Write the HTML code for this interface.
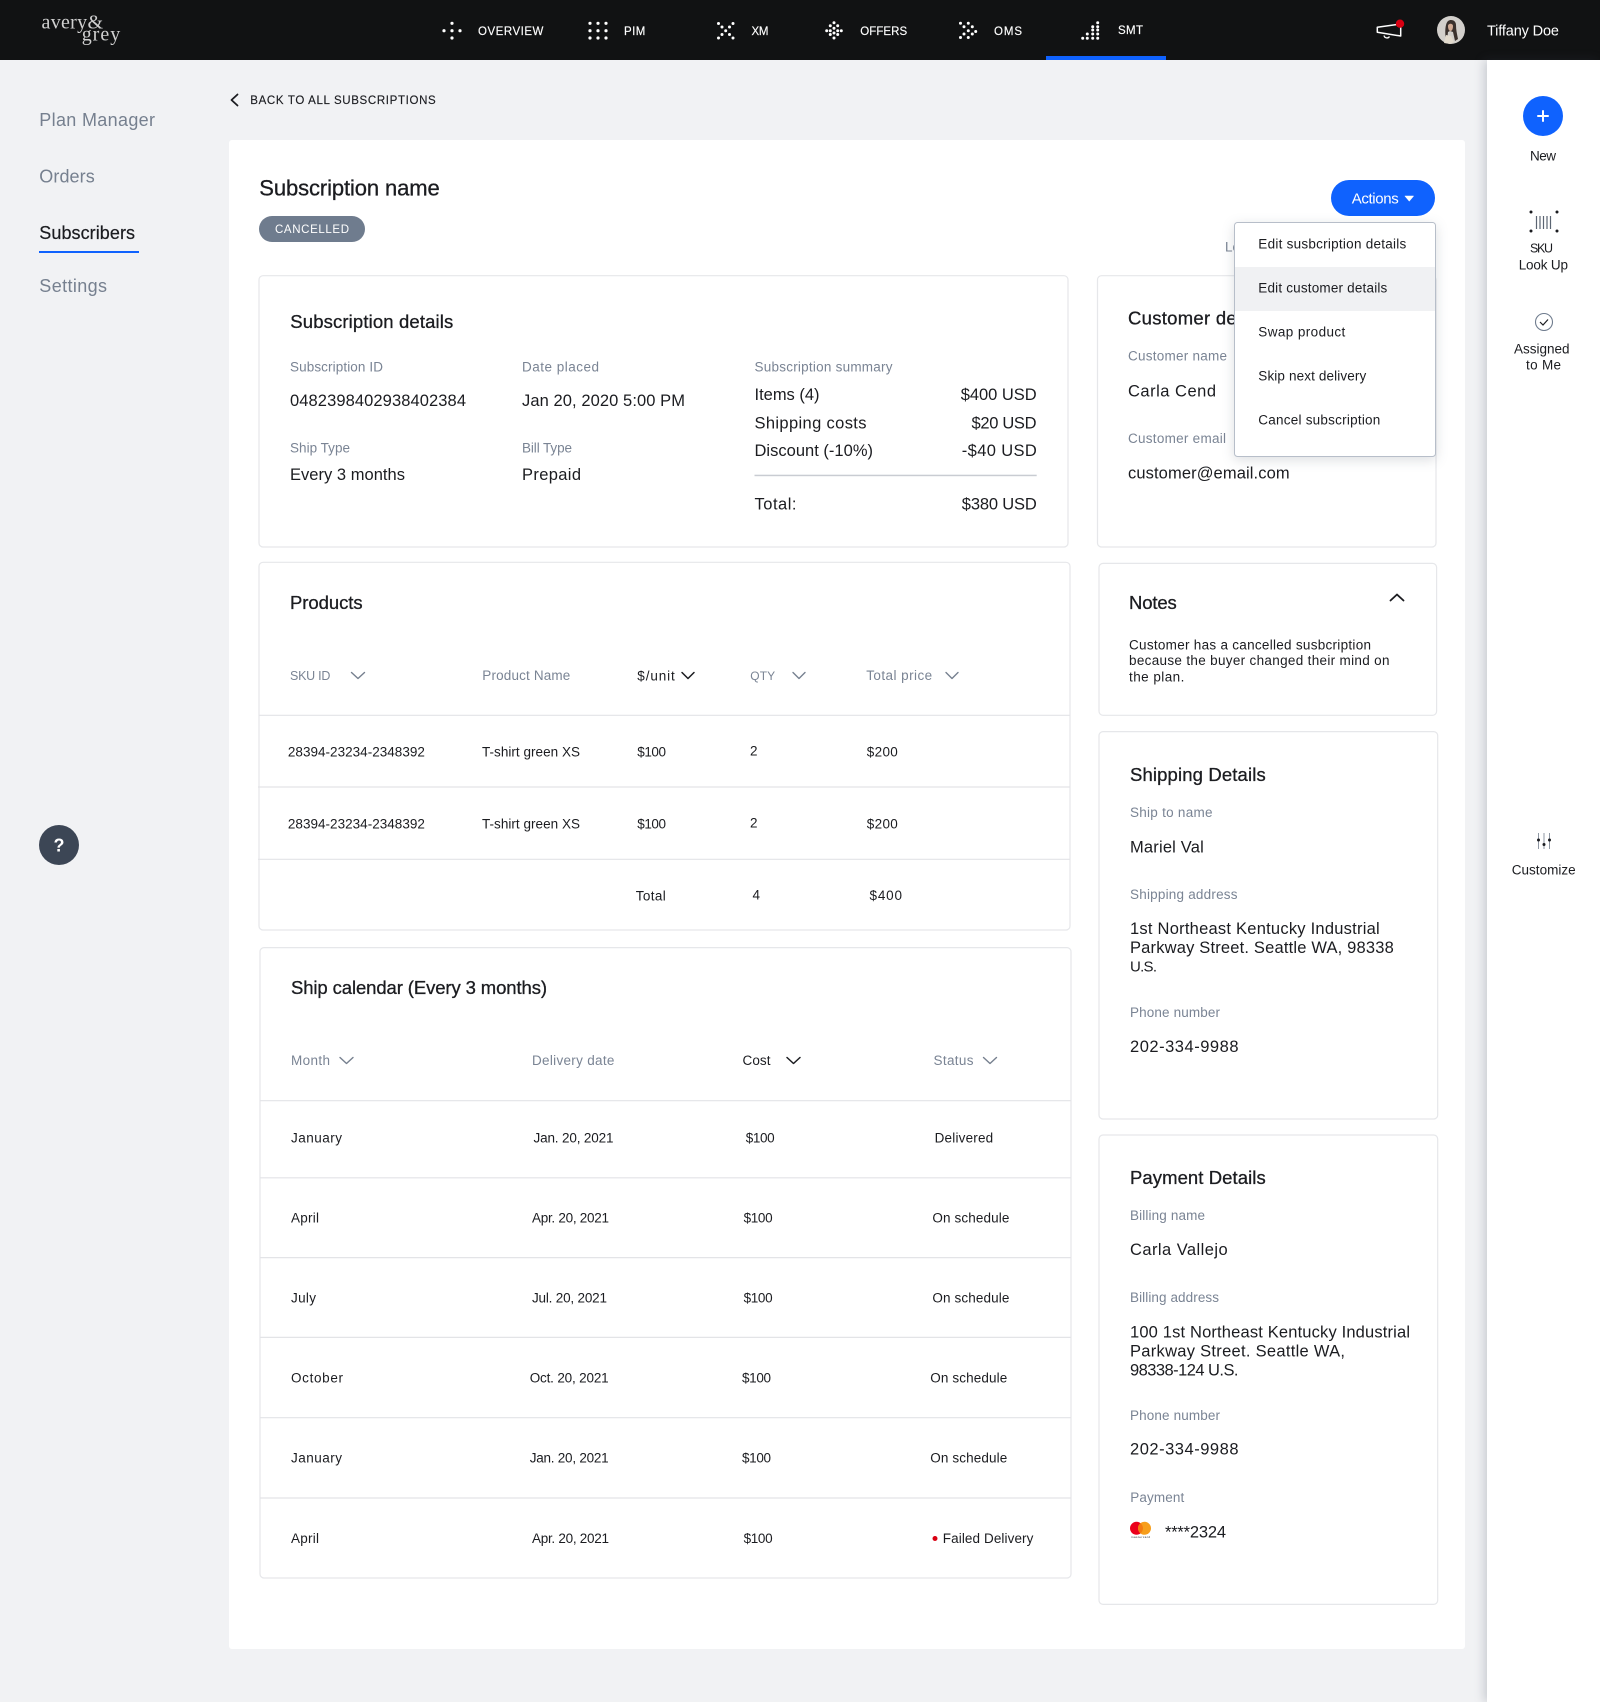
<!DOCTYPE html>
<html lang="en">
<head>
<meta charset="utf-8">
<title>Subscription name</title>
<style>
html,body{margin:0;padding:0;background:#f1f2f4;overflow:hidden}
svg{display:block;font-family:"Liberation Sans",sans-serif}
text{white-space:pre;fill:#1b1c20}
.l{font-size:13.5px;fill:#7a8494;transform:translateY(-.6px)}
.v{font-size:16.5px;transform:translateY(-.4px)}
.s{font-size:13.5px;transform:translateY(-.3px)}
.h{font-size:18.5px;stroke:#1b1c20;stroke-width:.3px;transform:translateY(-.3px)}
.n{font-size:11.5px;fill:#fff;stroke:#fff;stroke-width:.15px}
.g{font-size:18px;fill:#76808f;transform:translateY(-.4px)}
.c{fill:none;stroke:#76808f;stroke-width:1.4;stroke-linecap:round;stroke-linejoin:round}
.d{fill:none;stroke:#1b1c20;stroke-width:1.5;stroke-linecap:round;stroke-linejoin:round}
.card{fill:#fff;stroke:#e6e7ea;stroke-width:1.2}
.r{stroke:#e3e4e7;stroke-width:1.2}
.dots{fill:none;stroke:#fff;stroke-width:3.2;stroke-linecap:round}
</style>
</head>
<body>
<svg width="1600" height="1702" viewBox="0 0 1600 1702" xmlns="http://www.w3.org/2000/svg">
<rect width="1600" height="1702" fill="#f1f2f4"/>

<!-- top bar -->
<rect width="1600" height="60" fill="#111213"/>
<rect x="1046" y="56" width="120" height="4" fill="#0f62fe"/>
<text x="41.5" y="28.3" textLength="61.5" style="font-family:'Liberation Serif',serif;font-size:20px;fill:#d0d0d0">avery&amp;</text>
<text x="81.7" y="40.7" textLength="38.5" style="font-family:'Liberation Serif',serif;font-size:20px;fill:#d0d0d0">grey</text>

<path class="dots" d="M452 23.3h0M444 30.7h0M452 30.7h0M460 30.7h0M452 38h0"/>
<text class="n" x="478" y="35" textLength="65.4">OVERVIEW</text>
<path class="dots" d="M590 23.3h0M598 23.3h0M606 23.3h0M590 30.7h0M598 30.7h0M606 30.7h0M590 38h0M598 38h0M606 38h0"/>
<text class="n" x="624" y="35" textLength="21.4">PIM</text>
<path class="dots" style="stroke-width:3" d="M718.5 23.5h0M733 23.5h0M718.5 38h0M733 38h0M722 27h0M729.5 27h0M725.7 30.7h0M722 34.5h0M729.5 34.5h0"/>
<text class="n" x="751.5" y="35" textLength="17">XM</text>
<path class="dots" style="stroke-width:3" d="M834 22.7h0M830.3 25.7h0M837.7 25.7h0M834 28.3h0M826.7 30.7h0M830.3 30.7h0M837.7 30.7h0M841.3 30.7h0M834 33h0M830.3 34.5h0M837.7 34.5h0M834 38h0"/>
<text class="n" x="860.2" y="35" textLength="47">OFFERS</text>
<path class="dots" style="stroke-width:3" d="M960.5 23.3h0M968.3 23.3h0M964 26.7h0M972.3 26.7h0M968.3 30.7h0M975.7 31.5h0M964 34h0M972.3 34h0M960.5 37.5h0M968.3 37.5h0"/>
<text class="n" x="994" y="35" textLength="28">OMS</text>
<path class="dots" style="stroke-width:3" d="M1082.7 38.3h0M1087.3 38.3h0M1092.7 38.3h0M1097.7 38.3h0M1087.3 34h0M1092.7 34h0M1097.7 34h0M1092.7 30h0M1097.7 30h0M1092.7 26.7h0M1097.7 26.7h0M1097.7 22.7h0"/>
<text class="n" x="1118" y="34" textLength="25">SMT</text>

<path d="M1377.3 27.3L1400.7 24V36L1377.3 32.3Z" fill="none" stroke="#fff" stroke-width="1.5" stroke-linejoin="round"/>
<path d="M1384 35.5a3 3 0 0 0 5.5 1" fill="none" stroke="#fff" stroke-width="1.3"/>
<circle cx="1400" cy="23.7" r="4.2" fill="#d90012"/>
<circle cx="1451" cy="30" r="14" fill="#d2cfcb"/>
<path d="M1446 41c-1-7-1-12 0-16 1-4 3-5 5-5 3 0 5 2 5 5 0 5 1 9 2 14l-3 2-2-9-3-1-2 1-1 9z" fill="#3a312d"/>
<path d="M1448 26c0-3 5-3 5 0 0 3-1 5-2.500 5s-2.500-2-2.500-5z" fill="#d1ab95"/>
<path d="M1444 43l2-8 5 1 3 6-4 2z" fill="#e2dacd"/>
<text x="1487" y="35.5" textLength="72" style="font-size:14.5px;fill:#fff">Tiffany Doe</text>

<!-- left nav -->
<text class="g" x="39.3" y="126.5" textLength="115.7">Plan Manager</text>
<text class="g" x="39.3" y="183" textLength="55.4">Orders</text>
<text class="g" x="39.3" y="239.3" textLength="95.7" style="fill:#1b1c20;stroke:#1b1c20;stroke-width:.2px">Subscribers</text>
<rect x="39" y="251" width="100" height="2" fill="#0f62fe"/>
<text class="g" x="39.3" y="292.3" textLength="67.7">Settings</text>
<circle cx="59" cy="845" r="20" fill="#3c4655"/>
<text x="59" y="851.5" text-anchor="middle" style="font-size:18px;font-weight:bold;fill:#fff">?</text>

<!-- back -->
<path d="M237.5 94.500l-6 5.500 6 5.500" fill="none" stroke="#1b1c20" stroke-width="1.8" stroke-linecap="round" stroke-linejoin="round"/>
<text x="250.3" y="104" textLength="185.4" style="font-size:11.5px;stroke:#1b1c20;stroke-width:.15px">BACK TO ALL SUBSCRIPTIONS</text>

<!-- main card -->
<rect x="229" y="140" width="1236" height="1509" rx="3" fill="#fff"/>
<text x="259.3" y="195.5" textLength="180.4" style="font-size:22px;stroke:#1b1c20;stroke-width:.3px">Subscription name</text>
<rect x="259" y="216" width="106" height="26" rx="13" fill="#6f7c8e"/>
<text x="275" y="233" textLength="74" style="font-size:11.5px;fill:#fff">CANCELLED</text>
<text class="l" x="1225" y="252" textLength="15">Lo</text>

<!-- subscription details -->
<rect class="card" x="259" y="275.7" width="809" height="271.300" rx="4"/>
<text class="h" x="290.3" y="328.5" textLength="163">Subscription details</text>
<text class="l" x="290" y="371.9" textLength="93">Subscription ID</text>
<text class="l" x="522" y="371.9" textLength="77">Date placed</text>
<text class="l" x="754.5" y="371.9" textLength="138">Subscription summary</text>
<text class="v" x="290" y="406.5" textLength="176">0482398402938402384</text>
<text class="v" x="522" y="406.5" textLength="163">Jan 20, 2020 5:00 PM</text>
<text class="v" x="754.5" y="400.6" textLength="65">Items (4)</text>
<text class="v" x="960.7" y="400.6" textLength="76">$400 USD</text>
<text class="v" x="754.5" y="428.8" textLength="112">Shipping costs</text>
<text class="v" x="971.5" y="428.8" textLength="65">$20 USD</text>
<text class="v" x="754.5" y="456.5" textLength="118.5">Discount (-10%)</text>
<text class="v" x="961.8" y="456.5" textLength="75">-$40 USD</text>
<rect x="754.5" y="474.7" width="282.200" height="1.5" fill="#c9ccd2"/>
<text class="v" x="754.5" y="509.7" textLength="42">Total:</text>
<text class="v" x="961.8" y="509.7" textLength="75">$380 USD</text>
<text class="l" x="290" y="453.3" textLength="60">Ship Type</text>
<text class="l" x="522" y="453.3" textLength="50">Bill Type</text>
<text class="v" x="290" y="480.4" textLength="115">Every 3 months</text>
<text class="v" x="522" y="480.4" textLength="59">Prepaid</text>

<!-- customer -->
<rect class="card" x="1097.5" y="275.7" width="338.5" height="271.300" rx="4"/>
<text class="h" x="1128" y="325" textLength="143">Customer details</text>
<text class="l" x="1128" y="361" textLength="99">Customer name</text>
<text class="v" x="1128" y="396.8" textLength="88">Carla Cend</text>
<text class="l" x="1128" y="443.5" textLength="98">Customer email</text>
<text class="v" x="1128" y="478.7" textLength="161.6">customer@email.com</text>

<!-- products -->
<rect class="card" x="259" y="562.3" width="811" height="367.700" rx="4"/>
<text class="h" x="290" y="609.5" textLength="72.6">Products</text>
<text class="l" x="290" y="680.7" textLength="40.4" style="font-size:12.5px">SKU ID</text>
<path class="c" d="M351.5 672.500l6.5 6 6.5-6"/>
<text class="l" x="482.3" y="680.7" textLength="88">Product Name</text>
<text class="s" x="637.3" y="680.7" textLength="37.5">$/unit</text>
<path class="d" d="M682 672.500l6 6 6-6"/>
<text class="l" x="750.2" y="680.7" textLength="25" style="font-size:12px">QTY</text>
<path class="c" d="M793 672.500l6 6 6-6"/>
<text class="l" x="866.2" y="680.7" textLength="66">Total price</text>
<path class="c" d="M946 672.500l6 6 6-6"/>
<path class="r" d="M259 715.300H1070M258 787H1070M258 859.300H1070"/>
<text class="s" x="287.9" y="756.7" textLength="137">28394-23234-2348392</text>
<text class="s" x="482" y="756.7" textLength="98">T-shirt green XS</text>
<text class="s" x="637.3" y="756.7" textLength="28.7">$100</text>
<text class="s" x="750" y="755.7" textLength="7">2</text>
<text class="s" x="866.8" y="756.7" textLength="31">$200</text>
<text class="s" x="287.9" y="828.7" textLength="137">28394-23234-2348392</text>
<text class="s" x="482" y="828.7" textLength="98">T-shirt green XS</text>
<text class="s" x="637.3" y="828.7" textLength="28.7">$100</text>
<text class="s" x="750" y="827.7" textLength="7">2</text>
<text class="s" x="866.8" y="828.7" textLength="31">$200</text>
<text class="s" x="635.8" y="900.7" textLength="30">Total</text>
<text class="s" x="752.5" y="900" textLength="7">4</text>
<text class="s" x="869.5" y="900.5" textLength="32.5">$400</text>

<!-- calendar -->
<rect class="card" x="260" y="947.6" width="811" height="630.400" rx="4"/>
<text class="h" x="291" y="994.3" textLength="256">Ship calendar (Every 3 months)</text>
<text class="l" x="291" y="1065.5" textLength="39">Month</text>
<path class="c" d="M340 1057.500l6.5 6 6.5-6"/>
<text class="l" x="532" y="1065.5" textLength="82.4">Delivery date</text>
<text class="s" x="742.5" y="1065.5" textLength="28">Cost</text>
<path class="d" d="M787 1057.500l6.5 6 6.5-6"/>
<text class="l" x="933.5" y="1065.5" textLength="40">Status</text>
<path class="c" d="M983.5 1057.500l6.5 6 6.5-6"/>
<path class="r" d="M260 1100.700H1071M260 1177.800H1071M260 1257.600H1071M260 1337.400H1071M260 1417.700H1071M260 1498H1071"/>

<text class="s" x="291" y="1142.6" textLength="51">January</text>
<text class="s" x="533.5" y="1142.6" textLength="80">Jan. 20, 2021</text>
<text class="s" x="745.7" y="1142.6" textLength="29">$100</text>
<text class="s" x="934.6" y="1142.6" textLength="58.6">Delivered</text>

<text class="s" x="291" y="1223" textLength="28">April</text>
<text class="s" x="532" y="1223" textLength="77">Apr. 20, 2021</text>
<text class="s" x="743.6" y="1223" textLength="29">$100</text>
<text class="s" x="932.4" y="1223" textLength="77">On schedule</text>

<text class="s" x="291" y="1302.7" textLength="25">July</text>
<text class="s" x="532" y="1302.7" textLength="75">Jul. 20, 2021</text>
<text class="s" x="743.6" y="1302.7" textLength="29">$100</text>
<text class="s" x="932.4" y="1302.7" textLength="77">On schedule</text>

<text class="s" x="291" y="1383" textLength="52">October</text>
<text class="s" x="529.7" y="1383" textLength="79">Oct. 20, 2021</text>
<text class="s" x="742" y="1383" textLength="29">$100</text>
<text class="s" x="930.3" y="1383" textLength="77">On schedule</text>

<text class="s" x="291" y="1462.8" textLength="51">January</text>
<text class="s" x="529.7" y="1462.8" textLength="79">Jan. 20, 2021</text>
<text class="s" x="742" y="1462.8" textLength="29">$100</text>
<text class="s" x="930.3" y="1462.8" textLength="77">On schedule</text>

<text class="s" x="291" y="1543.2" textLength="28">April</text>
<text class="s" x="532" y="1543.2" textLength="77">Apr. 20, 2021</text>
<text class="s" x="743.6" y="1543.2" textLength="29">$100</text>
<circle cx="935" cy="1538.5" r="2.5" fill="#d90012"/>
<text class="s" x="942.8" y="1543.2" textLength="90.6">Failed Delivery</text>

<!-- notes -->
<rect class="card" x="1099" y="563.4" width="337.600" height="151.900" rx="4"/>
<text class="h" x="1129" y="609.5" textLength="47.7">Notes</text>
<path d="M1390.5 600.500l6.5-6 6.5 6" fill="none" stroke="#1b1c20" stroke-width="1.8" stroke-linecap="round" stroke-linejoin="round"/>
<text class="s" x="1129" y="649.8" textLength="242">Customer has a cancelled susbcription</text>
<text class="s" x="1129" y="665.5" textLength="260.5">because the buyer changed their mind on</text>
<text class="s" x="1129" y="681.8" textLength="55.4">the plan.</text>

<!-- shipping -->
<rect class="card" x="1099" y="731.6" width="338.700" height="387.400" rx="4"/>
<text class="h" x="1130" y="781.5" textLength="135.7">Shipping Details</text>
<text class="l" x="1130" y="817.5" textLength="82.5">Ship to name</text>
<text class="v" x="1130" y="852.7" textLength="73.8">Mariel Val</text>
<text class="l" x="1130" y="899.5" textLength="107.5">Shipping address</text>
<text class="v" x="1130" y="934.6" textLength="249.7">1st Northeast Kentucky Industrial</text>
<text class="v" x="1130" y="953.6" textLength="263.8">Parkway Street. Seattle WA, 98338</text>
<text class="v" x="1130" y="972" textLength="27" style="font-size:15px">U.S.</text>
<text class="l" x="1130" y="1017.8" textLength="90">Phone number</text>
<text class="v" x="1130" y="1052.4" textLength="108.5">202-334-9988</text>

<!-- payment -->
<rect class="card" x="1099" y="1135" width="338.700" height="469.400" rx="4"/>
<text class="h" x="1130" y="1184.3" textLength="135.7">Payment Details</text>
<text class="l" x="1130" y="1220.8" textLength="75">Billing name</text>
<text class="v" x="1130" y="1255.4" textLength="97.7">Carla Vallejo</text>
<text class="l" x="1130" y="1302.7" textLength="89">Billing address</text>
<text class="v" x="1130" y="1338" textLength="280">100 1st Northeast Kentucky Industrial</text>
<text class="v" x="1130" y="1357" textLength="215">Parkway Street. Seattle WA,</text>
<text class="v" x="1130" y="1376" textLength="108.5">98338-124 U.S.</text>
<text class="l" x="1130" y="1420.5" textLength="90">Phone number</text>
<text class="v" x="1130" y="1455" textLength="108.5">202-334-9988</text>
<text class="l" x="1130.3" y="1502.7" textLength="54">Payment</text>
<circle cx="1136.5" cy="1528.3" r="6.5" fill="#eb001b"/>
<circle cx="1144.5" cy="1528.3" r="6.5" fill="#f79e1b"/>
<path d="M1140.5 1523.200a6.5 6.5 0 0 1 0 10.200a6.5 6.5 0 0 1 0-10.200z" fill="#f47a10"/>
<text x="1131" y="1538" textLength="19" style="font-size:3px">mastercard</text>
<text class="v" x="1165" y="1537.7" textLength="61">****2324</text>

<!-- actions -->
<rect x="1331" y="180" width="104" height="36" rx="18" fill="#0f62fe"/>
<text x="1351.7" y="203.3" textLength="47" style="font-size:15px;fill:#fff">Actions</text>
<path d="M1405 196h8.5l-4.250 5z" fill="#fff" stroke="#fff" stroke-width=".6" stroke-linejoin="round"/>

<!-- dropdown -->
<g style="filter:drop-shadow(0 3px 6px rgba(40,50,70,.16))">
<rect x="1234.5" y="222.5" width="201" height="234" rx="3" fill="#fff" stroke="#b7bec9" stroke-width="1"/>
</g>
<rect x="1235" y="267" width="200" height="44" fill="#f0f1f3"/>
<text class="s" x="1258.3" y="248.7" textLength="148">Edit susbcription details</text>
<text class="s" x="1258.3" y="292.7" textLength="129">Edit customer details</text>
<text class="s" x="1258.3" y="336.7" textLength="87">Swap product</text>
<text class="s" x="1258.3" y="380.7" textLength="108">Skip next delivery</text>
<text class="s" x="1258.3" y="424.7" textLength="122">Cancel subscription</text>

<!-- right panel -->
<g style="filter:drop-shadow(-3px 0 5px rgba(60,70,85,.22))">
<rect x="1487" y="60" width="113" height="1642" fill="#fff"/>
</g>
<circle cx="1543" cy="116" r="20" fill="#0f62fe"/>
<path d="M1543 111v10M1538 116h10" stroke="#fff" stroke-width="2" stroke-linecap="round"/>
<text class="s" x="1530" y="160.7" textLength="26">New</text>
<path d="M1531 212h0M1557 212h0M1531 231h0M1557 231h0" stroke="#1b1c20" stroke-width="3" stroke-linecap="round" fill="none"/>
<path d="M1536.5 216v13M1540 216v13M1543.5 216v13M1547 216v13M1550.5 216v13" stroke="#5b6472" stroke-width="1.2" fill="none"/>
<text class="s" x="1530" y="253" textLength="23" style="font-size:12.5px">SKU</text>
<text class="s" x="1518.7" y="269.7" textLength="49.3">Look Up</text>
<circle cx="1544" cy="322" r="8.5" fill="none" stroke="#6f7c8e" stroke-width="1.1"/>
<path d="M1540 322l3 3 5-5.500" fill="none" stroke="#1b1c20" stroke-width="1.2"/>
<text class="s" x="1514" y="353.7" textLength="55.5">Assigned</text>
<text class="s" x="1526" y="370" textLength="35">to Me</text>
<path d="M1538.5 833v16M1544 833v16M1549.5 833v16" stroke="#8f97a3" stroke-width="1" fill="none"/>
<path d="M1538.5 840h0M1544 844.500h0M1549.5 840h0" stroke="#1b1c20" stroke-width="3" stroke-linecap="round" fill="none"/>
<text class="s" x="1511.7" y="875" textLength="64">Customize</text>
</svg>
</body>
</html>
